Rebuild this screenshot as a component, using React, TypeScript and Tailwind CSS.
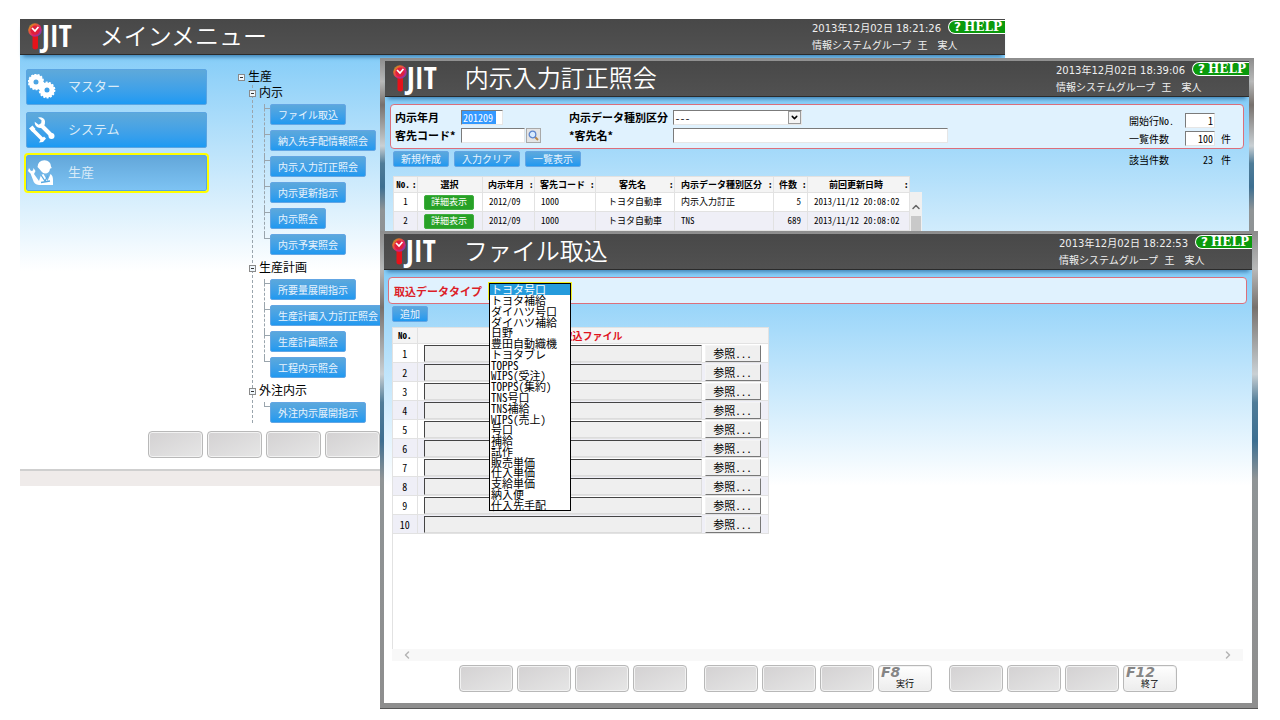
import type { ReactNode } from "react";
import clsx from "clsx";
import { ChevronDown, ChevronLeft, ChevronRight, ChevronUp } from "lucide-react";

const gothic =
  "font-['Noto_Sans_Mono_CJK_JP','Liberation_Sans','Noto_Sans_CJK_JP',sans-serif]";
const meiryo = "font-['DejaVu_Sans','Noto_Sans_CJK_JP',sans-serif]";

const tree = [
  {
    label: "内示",
    items: [
      "ファイル取込",
      "納入先手配情報照会",
      "内示入力訂正照会",
      "内示更新指示",
      "内示照会",
      "内示予実照会",
    ],
  },
  {
    label: "生産計画",
    items: ["所要量展開指示", "生産計画入力訂正照会", "生産計画照会", "工程内示照会"],
  },
  { label: "外注内示", items: ["外注内示展開指示"] },
];

const orderColumns = [
  { label: "No.", width: "w-[24px]", sortable: true },
  { label: "選択", width: "w-[65px]", sortable: false },
  { label: "内示年月", width: "w-[52px]", sortable: true },
  { label: "客先コード", width: "w-[61px]", sortable: true },
  { label: "客先名", width: "w-[79px]", sortable: true },
  { label: "内示データ種別区分", width: "w-[99px]", sortable: true },
  { label: "件数", width: "w-[34px]", sortable: true },
  { label: "前回更新日時", width: "w-[102px]", sortable: true },
];

const orders = [
  { month: "2012/09", code: "1000", name: "トヨタ自動車", type: "内示入力訂正", count: 5, updated: "2013/11/12 20:08:02" },
  { month: "2012/09", code: "1000", name: "トヨタ自動車", type: "TNS", count: 689, updated: "2013/11/12 20:08:02" },
];

const dataTypes = [
  "トヨタ号口",
  "トヨタ補給",
  "ダイハツ号口",
  "ダイハツ補給",
  "日野",
  "豊田自動織機",
  "トヨタブレ",
  "TOPPS",
  "WIPS(受注)",
  "TOPPS(集約)",
  "TNS号口",
  "TNS補給",
  "WIPS(売上)",
  "号口",
  "補給",
  "試作",
  "販売単価",
  "仕入単価",
  "支給単価",
  "納入便",
  "仕入先手配",
];

function Logo() {
  return (
    <div className="flex items-center" aria-label="iJIT">
      <svg width="14" height="32" viewBox="0 0 14 32" className="shrink-0">
        <defs>
          <linearGradient id="dial" x1="0" y1="0" x2="1" y2="1">
            <stop offset="0" stopColor="#4db04a" />
            <stop offset="0.25" stopColor="#e8702a" />
            <stop offset="0.6" stopColor="#e0206a" />
            <stop offset="1" stopColor="#4a4ac8" />
          </linearGradient>
        </defs>
        <path d="M4.500 14h5.500v13.500q0 2-2.700 2t-2.800-2z" fill="#e6121a" />
        <circle cx="7" cy="10" r="6.800" fill="url(#dial)" />
        <circle cx="7" cy="10.200" r="4.600" fill="#e01f3c" />
        <path d="M4 8l3 3 3.400-4" fill="none" stroke="#fff" strokeWidth="1.700" />
      </svg>
      <span className="font-['Open_Sans_Condensed','Liberation_Sans_Narrow','Liberation_Sans',sans-serif] text-[30px] leading-[34px] font-bold text-white">
        JIT
      </span>
    </div>
  );
}

function HelpLink() {
  return (
    <a
      href="#help"
      className="flex h-[14px] w-[57px] items-center rounded-l-full border border-r-0 border-white bg-[#0a9a0c] pl-[5px] font-['DejaVu_Serif',serif] text-[12px] leading-[14px] font-bold text-white"
    >
      <span className="mr-[3px] font-['DejaVu_Sans',sans-serif]">?</span>HELP
    </a>
  );
}

function TitleBar({ title, time }: { title: string; time: string }) {
  return (
    <header className="relative flex h-[36px] items-start border-b border-[#2b2b2b] bg-linear-to-b from-[#484848] to-[#515151] text-white shadow-[0_5px_4px_-3px_#3f83b5]">
      <div className="flex items-start gap-[28px] pl-2">
        <Logo />
        <h1 className="font-['Noto_Sans_CJK_JP',sans-serif] text-[24px] leading-[32px] font-[350]">{title}</h1>
      </div>
      <div className={clsx(meiryo, "ml-auto pt-px text-[10px] leading-[17px] whitespace-pre text-[#f0f0f0]")}>
        <div className="flex items-start gap-[7px]">
          <time>{time}</time>
          <HelpLink />
        </div>
        <p>情報システムグループ  王　実人</p>
      </div>
    </header>
  );
}

function BlueButton({ children, className }: { children: ReactNode; className?: string }) {
  return (
    <button
      type="button"
      className={clsx(
        "rounded-[2px] border border-[#63a6e4] bg-linear-to-b from-[#5ba8dc] to-[#1f99f0] px-[7px] text-[10px] whitespace-nowrap text-[#e9f4fd]",
        className,
      )}
    >
      {children}
    </button>
  );
}

function FunctionKeys({ labels, className }: { labels: Record<number, string>; className: string }) {
  return (
    <div className={clsx("mx-auto flex gap-[17px]", className)}>
      {[0, 4, 8].map((start) => (
        <div key={start} className="flex flex-1 gap-1">
          {[1, 2, 3, 4].map((n) => {
            const key = start + n;
            const label = labels[key];
            return (
              <button
                key={key}
                type="button"
                disabled={!label}
                className={clsx(
                  "flex h-[27px] flex-1 flex-col rounded-[4px] border border-[#b8b8b8] shadow-[inset_0_0_0_1px_#f2f2f2]",
                  label ? "bg-linear-to-b from-white to-[#ececec]" : "bg-linear-to-br from-[#d3d1d2] to-[#e6e6e6]",
                )}
              >
                {label && (
                  <>
                    <span className="w-full pl-0.5 text-left font-['DejaVu_Sans',sans-serif] text-[14px] leading-[12px] font-bold text-[#858585] italic">
                      F{key}
                    </span>
                    <span className="w-full text-center text-[9px] leading-[12px] text-black">{label}</span>
                  </>
                )}
              </button>
            );
          })}
        </div>
      ))}
    </div>
  );
}

function GearsIcon() {
  return (
    <svg width="28" height="26" viewBox="0 0 28 26" fill="none" stroke="#fff">
      <circle cx="8" cy="8" r="5" strokeWidth="5" />
      <circle cx="8" cy="8" r="7.4" strokeWidth="1.6" strokeDasharray="2 1.3" />
      <circle cx="19" cy="16" r="5" strokeWidth="5" />
      <circle cx="19" cy="16" r="7.5" strokeWidth="1.8" strokeDasharray="2 1.37" />
    </svg>
  );
}

function ToolsIcon() {
  return (
    <svg width="28" height="28" viewBox="0 0 28 28" fill="none" stroke="#fff">
      <path d="M4 13l11 11" strokeWidth="3.6" />
      <path d="M1 12.500l3.500-3 3 3.500-3 3zM11 26.500l1.500-2.500 3.500-3.500 2 2-3 3.500z" fill="#fff" stroke="none" />
      <path d="M13.500 9.500L24 20" strokeWidth="4" strokeLinecap="round" />
      <path d="M10 1.500q5.500-1 7 3.500.5 3-1.500 6-3 1.800-6 .3-3-2-2.800-5.500l4 3 2.500-1.500.300-3z" fill="#fff" stroke="none" />
      <circle cx="23.500" cy="20" r="3" fill="#fff" stroke="none" />
    </svg>
  );
}

function WorkerIcon() {
  return (
    <svg width="28" height="28" viewBox="0 0 28 28" fill="#fff">
      <path d="M9.500 8q.5-6.500 7-6.700 6 .2 6.500 6.200l.8 1.500-1.800.8q-.5 4.700-5 4.700-2-.2-3.500-2-2-2.500-4-4.500z" />
      <path d="M1 9l2 3 2-.5.500-2.500 2 3-1.500 3 5 7 2-6 2.500-1 4 7 3-7q2.500 1.500 2.500 6v5H11q-5-.5-6-5L2.500 14.500 0 12z" />
      <path d="M13 16l4 6 3-5.500M13 23.500l9-1.500" fill="none" stroke="#58a9e2" strokeWidth="1.300" />
    </svg>
  );
}

const menu = [
  { label: "マスター", icon: <GearsIcon />, active: false },
  { label: "システム", icon: <ToolsIcon />, active: false },
  { label: "生産", icon: <WorkerIcon />, active: true },
];

function ToggleBox() {
  return (
    <span className="flex h-[7px] w-[7px] shrink-0 items-center justify-center border border-[#8a8a8a] bg-[#eef6fc]">
      <span className="h-px w-[3px] bg-[#333]" />
    </span>
  );
}

function MainMenuWindow() {
  return (
    <section className="absolute top-[19px] right-[275px] left-[20px] bg-white">
      <TitleBar title="メインメニュー" time="2013年12月02日 18:21:26" />
      <div className="bg-[linear-gradient(to_bottom,#86cdf8,#ffffff_216px)] pb-[11px]">
        <div className="flex items-start gap-[31px] px-1.5 pt-[14px]">
          <nav className="flex w-[181px] flex-col gap-[7px]">
            {menu.map((item) => (
              <button
                key={item.label}
                type="button"
                className={clsx(
                  meiryo,
                  "flex h-[36px] items-center gap-[12px] rounded-[2px] border border-[#5aa5e2] pl-px text-[13px] text-[#d9ebf8]",
                  item.active
                    ? "bg-linear-to-b from-[#63a7da] to-[#7dc3f3] outline-2 outline-[#ffff00]"
                    : "bg-linear-to-b from-[#5ea9da] to-[#1b9af3]",
                )}
              >
                {item.icon}
                {item.label}
              </button>
            ))}
          </nav>
          <div className={clsx(meiryo, "pb-1 text-[12px] leading-4 text-black")}>
            <div className="flex items-center gap-[3px]">
              <ToggleBox />
              生産
            </div>
            <ul className="ml-[14px] flex flex-col gap-[5px] border-l border-dashed border-[#9aa5ad]">
              {tree.map((group) => (
                <li key={group.label} className="-ml-[4px]">
                  <div className="mb-[3px] flex items-center gap-[3px]">
                    <ToggleBox />
                    {group.label}
                  </div>
                  <ul className="ml-[15px]">
                    {group.items.map((item) => (
                      <li
                        key={item}
                        className="flex items-start border-l border-dashed border-[#9aa5ad] pb-[5px] last:border-transparent last:pb-0"
                      >
                        <span className="-ml-px h-[5px] w-[6px] border-b border-l border-dashed border-[#9aa5ad]" />
                        <BlueButton className={clsx(gothic, "h-[21px] leading-[19px]")}>{item}</BlueButton>
                      </li>
                    ))}
                  </ul>
                </li>
              ))}
            </ul>
          </div>
        </div>
        <div className="pt-1">
          <FunctionKeys labels={{}} className="w-[730px]" />
        </div>
      </div>
      <footer className="h-[17px] border-t-2 border-[#cfcfcf] bg-[#efebea]" />
    </section>
  );
}

const field =
  "h-[15px] border border-t-[#7b7b7b] border-r-[#e6e6e6] border-b-[#e6e6e6] border-l-[#7b7b7b] bg-white px-px text-[10px] leading-[12px] text-black";
const frame =
  "bg-[linear-gradient(to_bottom,#8c8c8c,#b9b9b9_8%,#77716d_16%,#c9d0d4_30%,#4f7c98_36%,#3d6f91_44%,#8f9496_52%,#8e8e8e)]";

function OrderWindow() {
  return (
    <section className={clsx(frame, "absolute top-[58px] right-[26px] left-[380px] pt-[3px] pr-[5px] pl-[5px]")}>
      <TitleBar title="内示入力訂正照会" time="2013年12月02日 18:39:06" />
      <div className={clsx(gothic, "bg-[linear-gradient(to_bottom,#86cdf8,#ffffff_216px)] px-[5px] pt-[7px] text-[11px] text-black")}>
        <form className="flex items-start justify-between rounded-[4px] border border-[#dc6f7b] bg-[#e0f2fe] pt-[5px] pb-[2px] pr-[12px] pl-[4px]">
          <div className="grid grid-cols-[66px_108px_104px_275px] items-center gap-y-[3px] leading-[15px] font-bold">
            <label htmlFor="month">内示年月</label>
            <input
              id="month"
              defaultValue="201209"
              className={clsx(field, "w-[42px] bg-[linear-gradient(to_right,#3399ff_34px,#ffffff_34px)] font-normal text-white")}
            />
            <label htmlFor="kind">内示データ種別区分</label>
            <div className="relative w-[129px]">
              <select id="kind" className={clsx(field, "block w-full appearance-none font-normal")}>
                <option>---</option>
              </select>
              <span className="pointer-events-none absolute top-px right-px flex h-[13px] w-[13px] items-center justify-center border border-[#9a9a9a] bg-[#f4f4f4]">
                <ChevronDown size={9} strokeWidth={4} />
              </span>
            </div>
            <label htmlFor="customer">客先コード*</label>
            <div className="flex gap-px">
              <input id="customer" className={clsx(field, "w-[64px]")} />
              <button
                type="button"
                aria-label="検索"
                className="flex h-[15px] w-[15px] items-center justify-center border border-[#a9a9a9] bg-[#e4e4e4]"
              >
                <svg width="11" height="11" viewBox="0 0 11 11" fill="none">
                  <path d="M7 7l3 3" stroke="#b98a4c" strokeWidth="2" />
                  <circle cx="4.500" cy="4.500" r="3.300" fill="#d8ebff" stroke="#5d86cf" strokeWidth="1.300" />
                </svg>
              </button>
            </div>
            <label htmlFor="customer-name">*客先名*</label>
            <input id="customer-name" className={clsx(field, "w-full")} />
          </div>
          <div className="grid grid-cols-[56px_30px_16px] items-center gap-y-[3px] pt-[3px] text-[10px] leading-[15px]">
            <label htmlFor="first-row">開始行No.</label>
            <input id="first-row" defaultValue="1" className={clsx(field, "w-full text-right")} />
            <span />
            <label htmlFor="page-size">一覧件数</label>
            <input id="page-size" defaultValue="100" className={clsx(field, "w-full text-right")} />
            <span className="text-right">件</span>
          </div>
        </form>
        <div className="flex items-start justify-between pt-[2px] pr-[13px] pl-[3px]">
          <div className="flex gap-[5px]">
            <BlueButton className="h-[16px] leading-[14px]">新規作成</BlueButton>
            <BlueButton className="h-[16px] leading-[14px]">入力クリア</BlueButton>
            <BlueButton className="h-[16px] leading-[14px]">一覧表示</BlueButton>
          </div>
          <p className="grid grid-cols-[56px_30px_16px] pt-px text-right text-[10px] leading-[15px]">
            <span className="text-left">該当件数</span>
            <span className="pr-0.5">23</span>
            <span>件</span>
          </p>
        </div>
        <div className="flex items-end pt-[9px] pl-[3px]">
          <table className="table-fixed border-collapse bg-white text-[9px] leading-[12px]">
            <thead>
              <tr className="h-[16px] bg-[#f4f4f4]">
                {orderColumns.map((col) => (
                  <th key={col.label} className={clsx(col.width, "border border-[#e2e2e2] p-0 whitespace-nowrap")}>
                    <div className="flex items-center pr-px">
                      <span className="flex-1 text-center">{col.label}</span>
                      {col.sortable && <span className="w-[4px]">:</span>}
                    </div>
                  </th>
                ))}
              </tr>
            </thead>
            <tbody>
              {orders.map((row, i) => (
                <tr key={row.count} className="h-[19px] odd:bg-white even:bg-[#efeff7] [&>td]:border [&>td]:border-[#e2e2e2] [&>td]:px-[6px] [&>td]:py-0 [&>td]:whitespace-nowrap">
                  <td className="text-center">{i + 1}</td>
                  <td className="text-center">
                    <button
                      type="button"
                      className="block h-[15px] w-[50px] rounded-[2px] border border-[#3fae3f] bg-[#27a127] text-[9px] leading-[12px] text-white"
                    >
                      詳細表示
                    </button>
                  </td>
                  <td>{row.month}</td>
                  <td>{row.code}</td>
                  <td className="text-center">{row.name}</td>
                  <td>{row.type}</td>
                  <td className="text-right">{row.count}</td>
                  <td>{row.updated}</td>
                </tr>
              ))}
            </tbody>
          </table>
          <div className="flex h-[39px] w-[12px] flex-col items-center bg-[#f0f0f0]">
            <span className="flex h-[24px] items-center pt-1.5">
              <ChevronUp size={12} strokeWidth={3} className="text-[#666]" />
            </span>
            <span className="w-[10px] flex-1 bg-[#c9c9c9]" />
          </div>
        </div>
        <div className="h-[120px]" />
      </div>
    </section>
  );
}

function ImportWindow() {
  return (
    <section
      className={clsx(
        frame,
        gothic,
        "absolute top-[231px] right-[22px] left-[380px] border-b border-[#555] pt-[3px] pr-[6px] pb-[5px] pl-[4px] text-black",
      )}
    >
      <TitleBar title="ファイル取込" time="2013年12月02日 18:22:53" />
      <div className="bg-[linear-gradient(to_bottom,#86cdf8,#ffffff_216px)] pt-[7px] pb-[11px]">
        <form className="mr-[5px] ml-[4px] flex items-center gap-[6px] rounded-[4px] border border-[#dc6f7b] bg-[#e0f2fe] pt-[4px] pb-[3px] pl-[5px]">
          <label htmlFor="data-type" className="text-[11px] leading-[16px] font-bold text-[#dc1e28]">
            取込データタイプ
          </label>
          <div className="relative">
            <select id="data-type" className="block h-[18px] w-[84px] appearance-none border-2 border-[#f2ee20] bg-white text-[11px]">
              {dataTypes.map((type) => (
                <option key={type}>{type}</option>
              ))}
            </select>
            <ul
              role="listbox"
              className="absolute top-px left-px z-10 grid h-[228px] w-[82px] auto-rows-fr border border-black bg-white text-[11px] leading-[10px]"
            >
              {dataTypes.map((type, i) => (
                <li
                  key={type}
                  role="option"
                  aria-selected={i === 0}
                  className="flex items-center pl-px whitespace-nowrap aria-selected:bg-[#259bdc] aria-selected:text-white"
                >
                  {type}
                </li>
              ))}
            </ul>
          </div>
        </form>
        <div className="mr-[9px] ml-[8px] pt-[2px]">
          <BlueButton className="block h-[16px] leading-[14px]">追加</BlueButton>
          <div className="mt-[5px] h-[322px] border-l border-[#e2e2e2]">
            <table className="table-fixed border-collapse bg-white text-[10px]">
              <thead>
                <tr className="h-[16px] bg-[#f4f4f4] leading-[12px]">
                  <th className="w-[24px] border border-l-0 border-[#e2e2e2] p-0 text-[9px]">No.</th>
                  <th className="w-[351px] border border-[#e2e2e2] p-0 text-[#e0141e]">取込ファイル</th>
                </tr>
              </thead>
              <tbody>
                {Array.from({ length: 10 }, (_, i) => (
                  <tr key={i} className="h-[19px] odd:bg-white even:bg-[#efeff7]">
                    <td className="border border-l-0 border-[#e2e2e2] p-0 text-center">{i + 1}</td>
                    <td className="border border-[#e2e2e2] p-0">
                      <div className="flex gap-[3px] pl-[6px]">
                        <input
                          readOnly
                          aria-label={`取込ファイル ${i + 1}`}
                          className="h-[17px] w-[278px] border border-t-[#444] border-r-[#dcdcdc] border-b-[#dcdcdc] border-l-[#444] bg-[#efefef]"
                        />
                        <button
                          type="button"
                          className="h-[17px] w-[56px] border border-t-[#f4f4f4] border-r-[#777] border-b-[#777] border-l-[#f4f4f4] bg-[#efefef] text-[11px] leading-[14px]"
                        >
                          参照...
                        </button>
                      </div>
                    </td>
                  </tr>
                ))}
              </tbody>
            </table>
          </div>
          <div className="flex h-[12px] items-center justify-between bg-[#f8f8f8] px-[9px] text-[#b4b4b4]">
            <ChevronLeft size={12} strokeWidth={3} />
            <ChevronRight size={12} strokeWidth={3} />
          </div>
        </div>
        <div className="pt-1">
          <FunctionKeys labels={{ 8: "実行", 12: "終了" }} className="w-[718px]" />
        </div>
      </div>
    </section>
  );
}

export default function App() {
  return (
    <main className="relative min-h-screen w-full overflow-hidden bg-white">
      <MainMenuWindow />
      <OrderWindow />
      <ImportWindow />
    </main>
  );
}
